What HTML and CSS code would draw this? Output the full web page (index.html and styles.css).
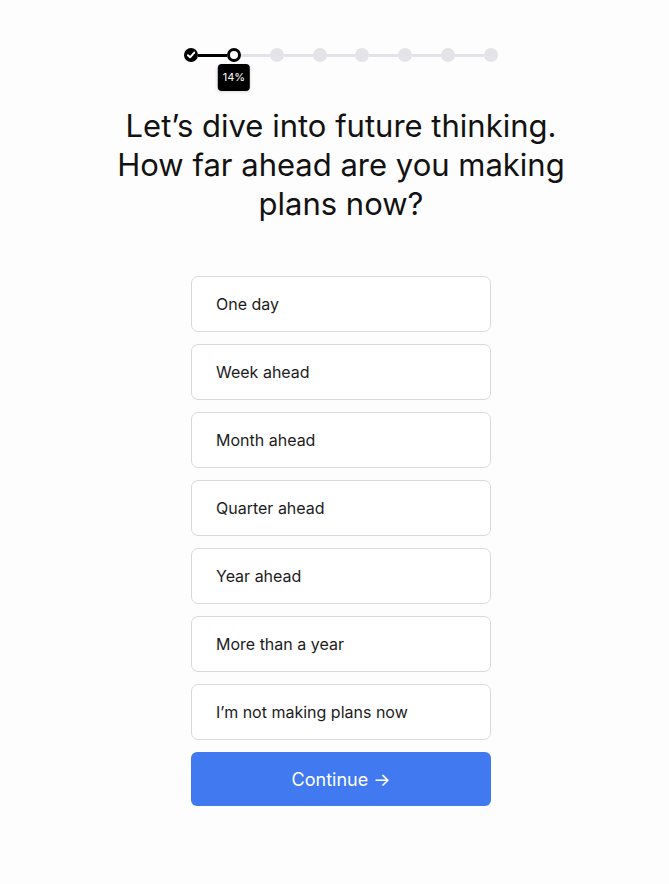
FILE: index.html
```html
<!DOCTYPE html>
<html lang="en">
<head>
<meta charset="utf-8">
<title>Future thinking</title>
<link rel="stylesheet" href="styles.css">
</head>
<body>
<main class="page">
  <div class="progress">
    <span class="dot dot-done">
      <svg viewBox="0 0 14 14" width="14" height="14"><path d="M4 7.3 L6.1 9.3 L10.2 4.6" fill="none" stroke="#fff" stroke-width="2" stroke-linecap="round" stroke-linejoin="round"/></svg>
    </span>
    <span class="seg seg-done"></span>
    <span class="dot dot-current"><span class="tip">14%</span></span>
    <span class="seg"></span>
    <span class="dot"></span>
    <span class="seg"></span>
    <span class="dot"></span>
    <span class="seg"></span>
    <span class="dot"></span>
    <span class="seg"></span>
    <span class="dot"></span>
    <span class="seg"></span>
    <span class="dot"></span>
    <span class="seg"></span>
    <span class="dot"></span>
  </div>

  <h1 class="title">Let’s dive into future thinking.<br>How far ahead are you making<br>plans now?</h1>

  <div class="options">
    <button class="option">One day</button>
    <button class="option">Week ahead</button>
    <button class="option">Month ahead</button>
    <button class="option">Quarter ahead</button>
    <button class="option">Year ahead</button>
    <button class="option">More than a year</button>
    <button class="option">I’m not making plans now</button>
    <button class="continue">Continue →</button>
  </div>
</main>
</body>
</html>
```
FILE: styles.css
```css
html, body {
  margin: 0;
  padding: 0;
  background: #fdfdfd;
}
body {
  font-family: Inter, "Noto Sans", sans-serif;
  color: #111;
}
.page {
  width: 669px;
  box-sizing: border-box;
  display: flex;
  flex-direction: column;
  align-items: center;
  padding: 48px 0 0 13px;
}
.progress {
  width: 314px;
  display: flex;
  align-items: center;
}
.dot {
  position: relative;
  width: 14px;
  height: 14px;
  border-radius: 50%;
  background: #e4e3e7;
  flex: none;
  box-sizing: border-box;
}
.dot-done {
  background: #000;
  display: flex;
  align-items: center;
  justify-content: center;
}
.dot-done svg { display: block; }
.dot-current {
  background: #fff;
  border: 3px solid #000;
}
.seg {
  flex: 1;
  height: 3px;
  background: #e4e3e7;
}
.seg-done { background: #000; }
.tip {
  position: absolute;
  top: 13px;
  left: 50%;
  transform: translateX(-50%);
  background: #000;
  color: #fff;
  font-size: 11px;
  line-height: 27px;
  height: 27px;
  padding: 0 5px;
  border-radius: 4px;
  white-space: nowrap;
  box-shadow: 0 1px 3px rgba(0,0,0,0.15);
}
.title {
  margin: 44px 0 0;
  font-size: 31px;
  font-weight: 400;
  line-height: 39px;
  text-align: center;
  color: #121212;
  letter-spacing: 0;
}
.options {
  margin-top: 53px;
  width: 300px;
  display: flex;
  flex-direction: column;
  gap: 12px;
}
.option {
  height: 56px;
  box-sizing: border-box;
  border: 1px solid #d9d9d9;
  border-radius: 7px;
  background: #fff;
  text-align: left;
  padding: 0 0 0 24px;
  font-family: Inter, "Noto Sans", sans-serif;
  font-size: 16px;
  color: #1c1c1c;
}
.continue {
  height: 54px;
  border: none;
  border-radius: 6px;
  background: #4179f1;
  color: #fff;
  font-family: Inter, "Noto Sans", sans-serif;
  font-size: 18px;
}
```
